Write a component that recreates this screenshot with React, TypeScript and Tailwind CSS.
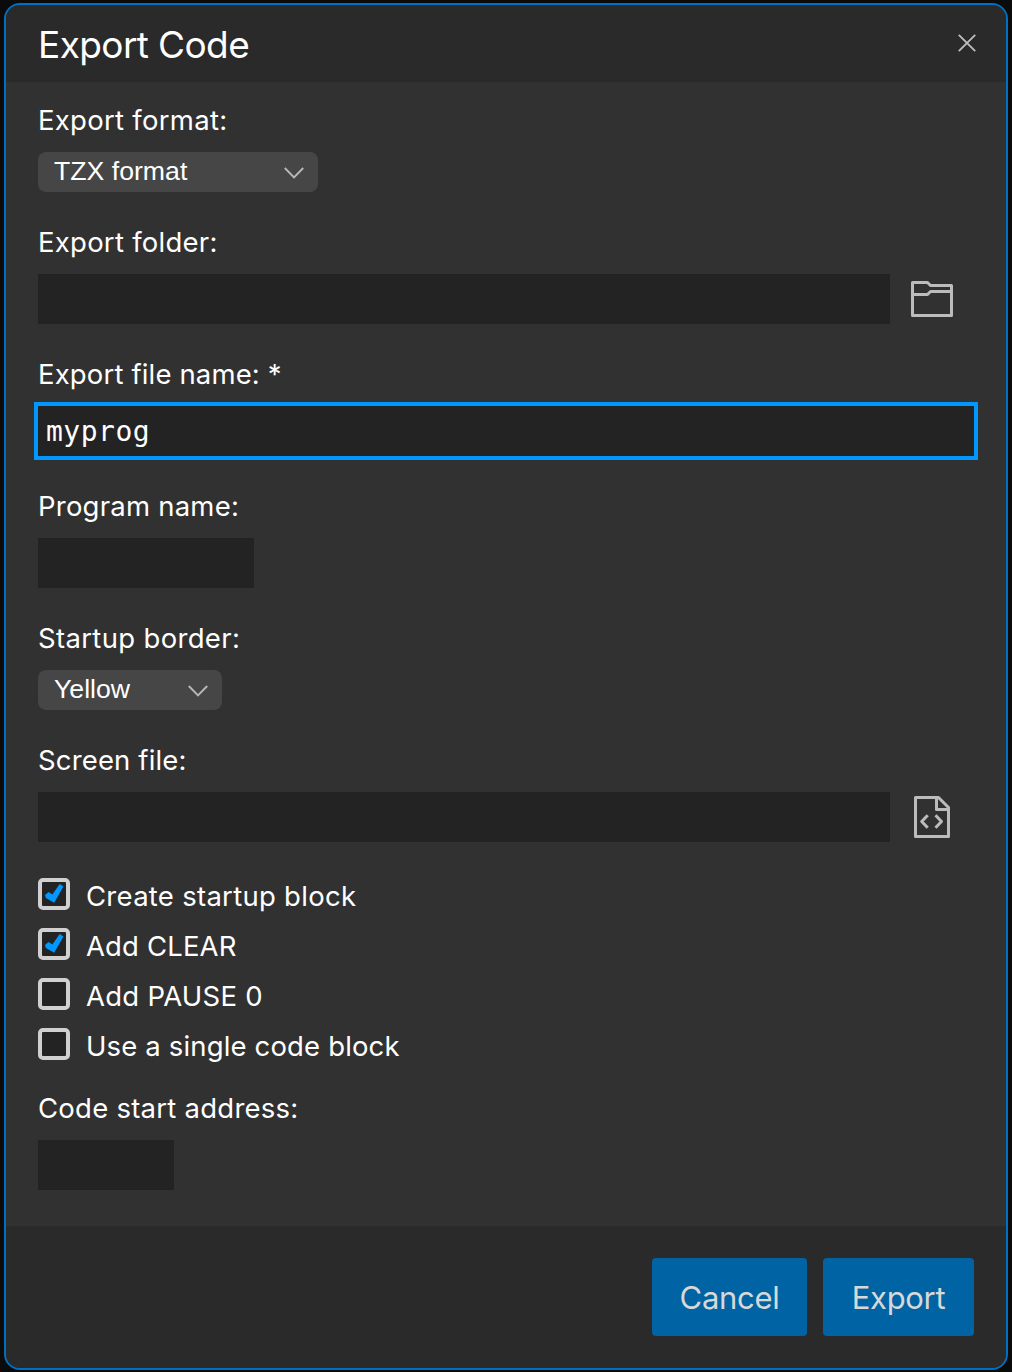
import type { ReactNode } from "react";

function Label({ children, tracking = "tracking-[0.28px]" }: { children: ReactNode; tracking?: string }) {
  return <div className={`h-12 whitespace-nowrap text-[27.5px] leading-8 ${tracking}`}>{children}</div>;
}

function Select({ value, width }: { value: string; width: string }) {
  return (
    <div className={`flex h-10 items-center justify-between rounded-lg bg-[#464646] pr-3.5 pl-4 ${width}`}>
      <span className="mb-0.5 font-['Liberation_Sans',sans-serif] text-[26.67px] leading-10">{value}</span>
      <svg className="mt-0.5 h-3 w-5" viewBox="0 0 20 12" fill="none" stroke="#b8b8b8" strokeWidth="1.9">
        <path d="M.8 1 10 10.4 19.2 1" />
      </svg>
    </div>
  );
}

function Field({ label, tracking, children }: { label: string; tracking?: string; children: ReactNode }) {
  return (
    <div className="mb-[34px]">
      <Label tracking={tracking}>{label}</Label>
      {children}
    </div>
  );
}

function Check({ label, checked, tracking = "tracking-[0.28px]" }: { label: string; checked?: boolean; tracking?: string }) {
  return (
    <div className="flex h-[50px] items-center">
      <div className="-mt-0.5 mr-4 h-8 w-8 shrink-0 rounded-[5px] border-4 border-[#d0d0d0] bg-[#232323]">
        {checked && (
          <svg className="h-6 w-6" viewBox="0 0 24 24" fill="#0098ff">
            <path d="M3 12.9 6.5 10.1 10.4 12.5 17.7 2.1 21.4 4.4 12.2 20.7 3.9 16Z" />
          </svg>
        )}
      </div>
      <span className={`mt-0.5 whitespace-nowrap text-[27.5px] leading-8 ${tracking}`}>{label}</span>
    </div>
  );
}

export default function App() {
  return (
    <div className="h-[1372px] w-[1012px] bg-[#0b0b0b] px-1 pt-[3px] font-[Inter,sans-serif] text-white">
      <div className="flex h-[1367px] flex-col overflow-hidden rounded-[16px] border-2 border-[#0070c0] bg-[#313131]">
        <header className="flex h-[77px] shrink-0 items-center justify-between bg-[#2a2a2a] pr-[30px] pl-8">
          <h1 className="mt-0.5 text-[37px] leading-none tracking-[-0.6px] whitespace-nowrap">Export Code</h1>
          <svg className="-mt-0.5 h-[18px] w-[18px]" viewBox="0 0 18 18" fill="none" stroke="#bcbcbc" strokeWidth="1.9">
            <path d="M.8.8 17.2 17.2M17.2.8.8 17.2" />
          </svg>
        </header>
        <main className="grow px-8 pt-[22px]">
          <Field label="Export format:">
            <Select value="TZX format" width="w-[280px]" />
          </Field>
          <Field label="Export folder:" tracking="tracking-[0.25px]">
            <div className="flex h-[50px] items-center">
              <div className="h-full w-[852px] bg-[#232323]" />
              <svg className="ml-[21px] h-9 w-[42px]" viewBox="0 0 42 36" fill="none" stroke="#bcbcbc" strokeWidth="3" strokeLinejoin="round">
                <path d="M1.5 1.5H16.5L19.5 4.5H40.5V34.5H1.5ZM1.5 13.5H16.5L19.5 10.5H40.5" />
              </svg>
            </div>
          </Field>
          <Field label="Export file name: *" tracking="tracking-[0.15px]">
            <div className="h-[50px] bg-[#232323] px-2 font-['DejaVu_Sans_Mono',monospace] text-[28px] leading-[52px] tracking-[0.5px] outline-4 outline-[#0098ff]">
              myprog
            </div>
          </Field>
          <Field label="Program name:" tracking="tracking-[0.22px]">
            <div className="h-[50px] w-[216px] bg-[#232323]" />
          </Field>
          <Field label="Startup border:" tracking="tracking-[0.33px]">
            <Select value="Yellow" width="w-[184px]" />
          </Field>
          <Label tracking="tracking-[0.15px]">Screen file:</Label>
          <div className="mb-7 flex h-[50px] items-center">
            <div className="h-full w-[852px] bg-[#232323]" />
            <svg className="ml-6 h-[42px] w-9" viewBox="0 0 36 42" fill="none" stroke="#bcbcbc" strokeWidth="3" strokeLinejoin="round">
              <path d="M1.5 1.5H24.5L34.5 11.5V40.5H1.5ZM22.5 1.5V13.5H34.5" />
              <path d="M13.7 19.3 7.7 25.5 13.7 31.7M21.5 19.3 27.5 25.5 21.5 31.7" />
            </svg>
          </div>
          <Check label="Create startup block" checked />
          <Check label="Add CLEAR" checked tracking="tracking-[0.15px]" />
          <Check label="Add PAUSE 0" tracking="tracking-[0.25px]" />
          <Check label="Use a single code block" tracking="tracking-[0.15px]" />
          <div className="mt-[22px]">
            <Label tracking="tracking-[0.25px]">Code start address:</Label>
            <div className="h-[50px] w-[136px] bg-[#232323]" />
          </div>
        </main>
        <footer className="flex h-[142px] shrink-0 justify-end gap-4 bg-[#2a2a2a] pt-8 pr-8 text-[31px] tracking-[-0.3px] text-[#d8d8d8]">
          <button className="h-[78px] w-[155px] rounded bg-[#0063a3] pt-0.5">Cancel</button>
          <button className="h-[78px] w-[151px] rounded bg-[#0063a3] pt-0.5">Export</button>
        </footer>
      </div>
    </div>
  );
}
